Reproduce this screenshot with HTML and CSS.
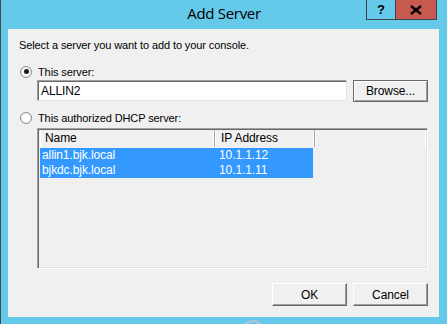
FILE: index.html
```html
<!DOCTYPE html>
<html lang="en">
  <head>
    <meta charset="utf-8" />
    <title>Add Server</title>
    <link rel="stylesheet" href="styles.css">
  </head>
  <body>
    <div class="window">
      <div class="titlebar">
        <div class="title">Add Server</div>
        <div class="caption-buttons">
          <div class="cap-btn help">?</div>
          <div class="cap-btn close">
            <svg width="12" height="10" viewBox="0 0 12 10"><path d="M1 1 L11 9 M11 1 L1 9" stroke="#000" stroke-width="2.4" fill="none"/></svg>
          </div>
        </div>
      </div>
      <div class="client">
        <p class="intro">Select a server you want to add to your console.</p>

        <label class="radio-row first">
          <span class="radio checked"></span>
          <span>This server:</span>
        </label>
        <div class="input-row">
          <div class="textbox">ALLIN2</div>
          <div class="btn browse">Browse...</div>
        </div>

        <label class="radio-row second">
          <span class="radio"></span>
          <span>This authorized DHCP server:</span>
        </label>
        <div class="listview">
          <div class="list-header">
            <div class="col name">Name</div>
            <div class="col ip">IP Address</div>
            <div class="col rest"></div>
          </div>
          <div class="list-row selected">
            <div class="cell name">allin1.bjk.local</div>
            <div class="cell ip">10.1.1.12</div>
          </div>
          <div class="list-row selected">
            <div class="cell name">bjkdc.bjk.local</div>
            <div class="cell ip">10.1.1.11</div>
          </div>
        </div>

        <div class="footer">
          <div class="btn ok">OK</div>
          <div class="btn cancel">Cancel</div>
        </div>
      </div>
      <div class="frame-bottom">
        <span class="busy-ring"></span>
      </div>
    </div>
  </body>
</html>
```

FILE: styles.css
```css
* {
  margin: 0;
  padding: 0;
  box-sizing: border-box;
}
body {
  background: #65cae9;
  font-family: "Liberation Sans", Arial, sans-serif;
  font-size: 11px;
  color: #000;
}
.window {
  width: 447px;
  height: 324px;
  background: #65cae9;
  border-left: 1px solid #3c4a50;
  display: flex;
  flex-direction: column;
  overflow: hidden;
}
.titlebar {
  height: 29px;
  display: flex;
  position: relative;
}
.title {
  flex: 1;
  text-align: center;
  font-family: "Open Sans", "Liberation Sans", sans-serif;
  font-size: 15px;
  line-height: 27px;
  color: #000;
  letter-spacing: -0.3px;
}
.caption-buttons {
  position: absolute;
  top: 0;
  right: 10px;
  display: flex;
}
.cap-btn {
  height: 20px;
  border: 1px solid #3a4548;
  border-top: none;
  display: flex;
  align-items: center;
  justify-content: center;
  font-weight: bold;
  font-size: 13px;
}
.help {
  width: 29px;
  border-right: none;
  background: #65cae9;
}
.close {
  width: 42px;
  background: #c75a50;
}
.client {
  margin: 0 8px 0 7px;
  height: 288px;
  background: #f0f0f0;
  padding: 10px 11px 0 11px;
  display: flex;
  flex-direction: column;
  letter-spacing: -0.1px;
}
.intro {
  line-height: 13px;
}
.radio-row {
  display: flex;
  align-items: center;
  height: 13px;
  gap: 6px;
  margin-left: 1px;
}
.radio-row.first {
  margin-top: 13px;
}
.radio-row.second {
  margin-top: 9px;
}
.radio {
  width: 12px;
  height: 12px;
  border-radius: 50%;
  border: 1px solid #8d8d8d;
  background: radial-gradient(circle, #ffffff 40%, #e4e4e4 100%);
  display: flex;
  align-items: center;
  justify-content: center;
}
.radio.checked::after {
  content: "";
  width: 5px;
  height: 5px;
  border-radius: 50%;
  background: #1a1a1a;
}
.input-row {
  display: flex;
  gap: 6px;
  margin: 2px 0 0 18px;
}
.textbox {
  width: 310px;
  height: 21px;
  background: #fff;
  border: 1px solid #a0a0a0;
  border-right-color: #e3e3e3;
  border-bottom-color: #e3e3e3;
  box-shadow: inset 1px 1px 0 #696969;
  padding: 3px 3px;
  font-size: 12px;
  line-height: 14px;
}
.btn {
  width: 75px;
  height: 23px;
  background: #f0f0f0;
  border: 1px solid #fff;
  border-right-color: #696969;
  border-bottom-color: #696969;
  box-shadow: inset -1px -1px 0 #a0a0a0;
  display: flex;
  align-items: center;
  justify-content: center;
  font-size: 12px;
}
.browse {
  height: 22px;
  border: 1px solid #6a6a6a;
  box-shadow: inset 1px 1px 0 #fff, inset -1px -1px 0 #a0a0a0;
}
.listview {
  margin: 4px 0 0 18px;
  width: 391px;
  height: 141px;
  border: 1px solid #a0a0a0;
  border-right-color: #fff;
  border-bottom-color: #fff;
  box-shadow: inset 1px 1px 0 #696969, inset -1px -1px 0 #e3e3e3;
  padding: 1px 1px 0 2px;
  background: #f0f0f0;
}
.list-header {
  display: flex;
  height: 18px;
  border-bottom: 1px solid #f0f0f0;
}
.col {
  height: 17px;
  line-height: 16px;
  border-right: 1px solid #a0a0a0;
  box-shadow: inset -1px 0 0 #fff, inset 1px 0 0 #fff;
  padding-left: 5px;
  font-size: 12px;
  background: #f0f0f0;
}
.col.name {
  width: 175px;
}
.col.ip {
  width: 100px;
  padding-left: 6px;
}
.col.rest {
  flex: 1;
  border-right: none;
}
.list-row {
  display: flex;
  height: 15px;
  line-height: 14px;
  font-size: 12px;
  width: 273px;
}
.list-row.selected {
  background: #3399ff;
  color: #fff;
}
.cell.name {
  width: 179px;
  padding-left: 2px;
}
.cell.ip {
  flex: 1;
}
.footer {
  display: flex;
  justify-content: flex-end;
  gap: 6px;
  margin-top: 14px;
}
.frame-bottom {
  flex: 1;
  position: relative;
}
.busy-ring {
  position: absolute;
  left: 241px;
  top: 3px;
  width: 22px;
  height: 22px;
  border-radius: 50%;
  border: 2px solid rgba(190, 200, 205, 0.8);
}
```
